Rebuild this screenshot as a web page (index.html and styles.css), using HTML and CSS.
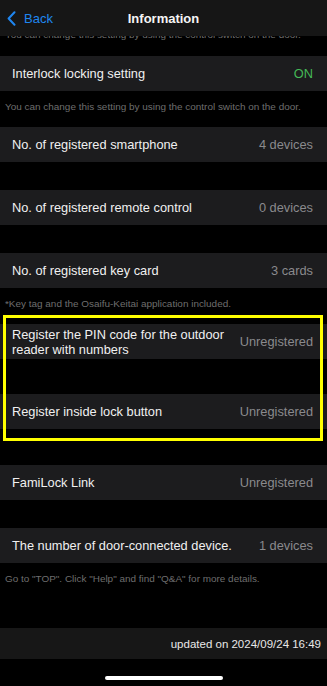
FILE: index.html
```html
<!DOCTYPE html>
<html lang="en">
<head>
<meta charset="utf-8">
<title>Information</title>
<link rel="stylesheet" href="styles.css">
</head>
<body>
<div class="screen">
  <header class="nav">
    <div class="nav-back">
      <svg class="chev" width="9" height="15" viewBox="0 0 9 15"><path d="M7.5 1.2 L1.6 7.5 L7.5 13.8" fill="none" stroke="#1f86f0" stroke-width="2" stroke-linecap="round" stroke-linejoin="round"/></svg>
      <span>Back</span>
    </div>
    <div class="nav-title">Information</div>
    <div class="nav-spacer"></div>
  </header>

  <div class="clip">
    <p class="note clipped">You can change this setting by using the control switch on the door.</p>
  </div>

  <div class="row"><span class="label">Interlock locking setting</span><span class="value on">ON</span></div>
  <p class="note gap-note">You can change this setting by using the control switch on the door.</p>

  <div class="row"><span class="label">No. of registered smartphone</span><span class="value">4 devices</span></div>
  <div class="gap"></div>
  <div class="row"><span class="label">No. of registered remote control</span><span class="value">0 devices</span></div>
  <div class="gap"></div>
  <div class="row"><span class="label">No. of registered key card</span><span class="value">3 cards</span></div>
  <p class="note gap-note">*Key tag and the Osaifu-Keitai application included.</p>

  <div class="group">
    <div class="row"><span class="label two">Register the PIN code for the outdoor reader with numbers</span><span class="value">Unregistered</span></div>
    <div class="gap gap-35"></div>
    <div class="row"><span class="label">Register inside lock button</span><span class="value">Unregistered</span></div>
    <div class="highlight"></div>
  </div>
  <div class="gap gap-36"></div>

  <div class="row"><span class="label">FamiLock Link</span><span class="value">Unregistered</span></div>
  <div class="gap"></div>
  <div class="row"><span class="label">The number of door-connected device.</span><span class="value">1 devices</span></div>
  <p class="note gap-note tail">Go to "TOP". Click "Help" and find "Q&amp;A" for more details.</p>

  <div class="updated">updated on 2024/09/24 16:49</div>
  <div class="home"><span class="home-bar"></span></div>
</div>
</body>
</html>
```

FILE: styles.css
```css
* { box-sizing: border-box; }
html, body {
  margin: 0;
  padding: 0;
  background: #000;
}
body {
  font-family: "Liberation Sans", Arial, sans-serif;
  color: #f2f2f2;
}
.screen {
  width: 327px;
  height: 686px;
  overflow: hidden;
  display: flex;
  flex-direction: column;
}
.nav {
  height: 36px;
  flex: none;
  background: #161616;
  display: grid;
  grid-template-columns: 1fr auto 1fr;
  align-items: center;
}
.nav-back {
  display: flex;
  align-items: center;
  gap: 8px;
  padding-left: 7px;
  color: #1f86f0;
  font-size: 13px;
}
.chev { display: block; }
.nav-title {
  font-size: 13px;
  font-weight: 700;
  color: #f5f5f5;
}
.clip {
  height: 20px;
  flex: none;
  overflow: hidden;
}
.note {
  margin: 0;
  padding-left: 5px;
  font-size: 9.95px;
  line-height: 12px;
  color: #6e6e6e;
  white-space: nowrap;
}
.clipped {
  margin-top: -7px;
}
.gap-note {
  height: 36px;
  flex: none;
  padding-top: 10px;
}
.gap-note.tail {
  height: 65px;
}
.row {
  height: 35px;
  flex: none;
  background: #1c1c1e;
  display: flex;
  align-items: center;
  justify-content: space-between;
  padding: 0 14px 0 12px;
  font-size: 12.8px;
}
.label {
  color: #f0f0f0;
}
.label.two {
  line-height: 15px;
  max-width: 225px;
}
.value {
  color: #8a8a8d;
  white-space: nowrap;
}
.value.on {
  color: #45b957;
}
.gap {
  height: 28px;
  flex: none;
}
.gap-35 { height: 35px; }
.gap-36 { height: 36px; }
.group {
  position: relative;
  display: flex;
  flex-direction: column;
  flex: none;
}
.highlight {
  position: absolute;
  left: 3px;
  right: 4px;
  top: -9px;
  bottom: -12px;
  border: 3px solid #ffff00;
  pointer-events: none;
}
.updated {
  height: 31px;
  flex: none;
  background: #171717;
  display: flex;
  align-items: center;
  justify-content: flex-end;
  padding-right: 6px;
  font-size: 11.5px;
  color: #e8e8e8;
}
.home {
  flex: none;
  display: flex;
  justify-content: center;
  padding-top: 17px;
}
.home-bar {
  width: 118px;
  height: 4px;
  border-radius: 2px;
  background: #fff;
}
```
